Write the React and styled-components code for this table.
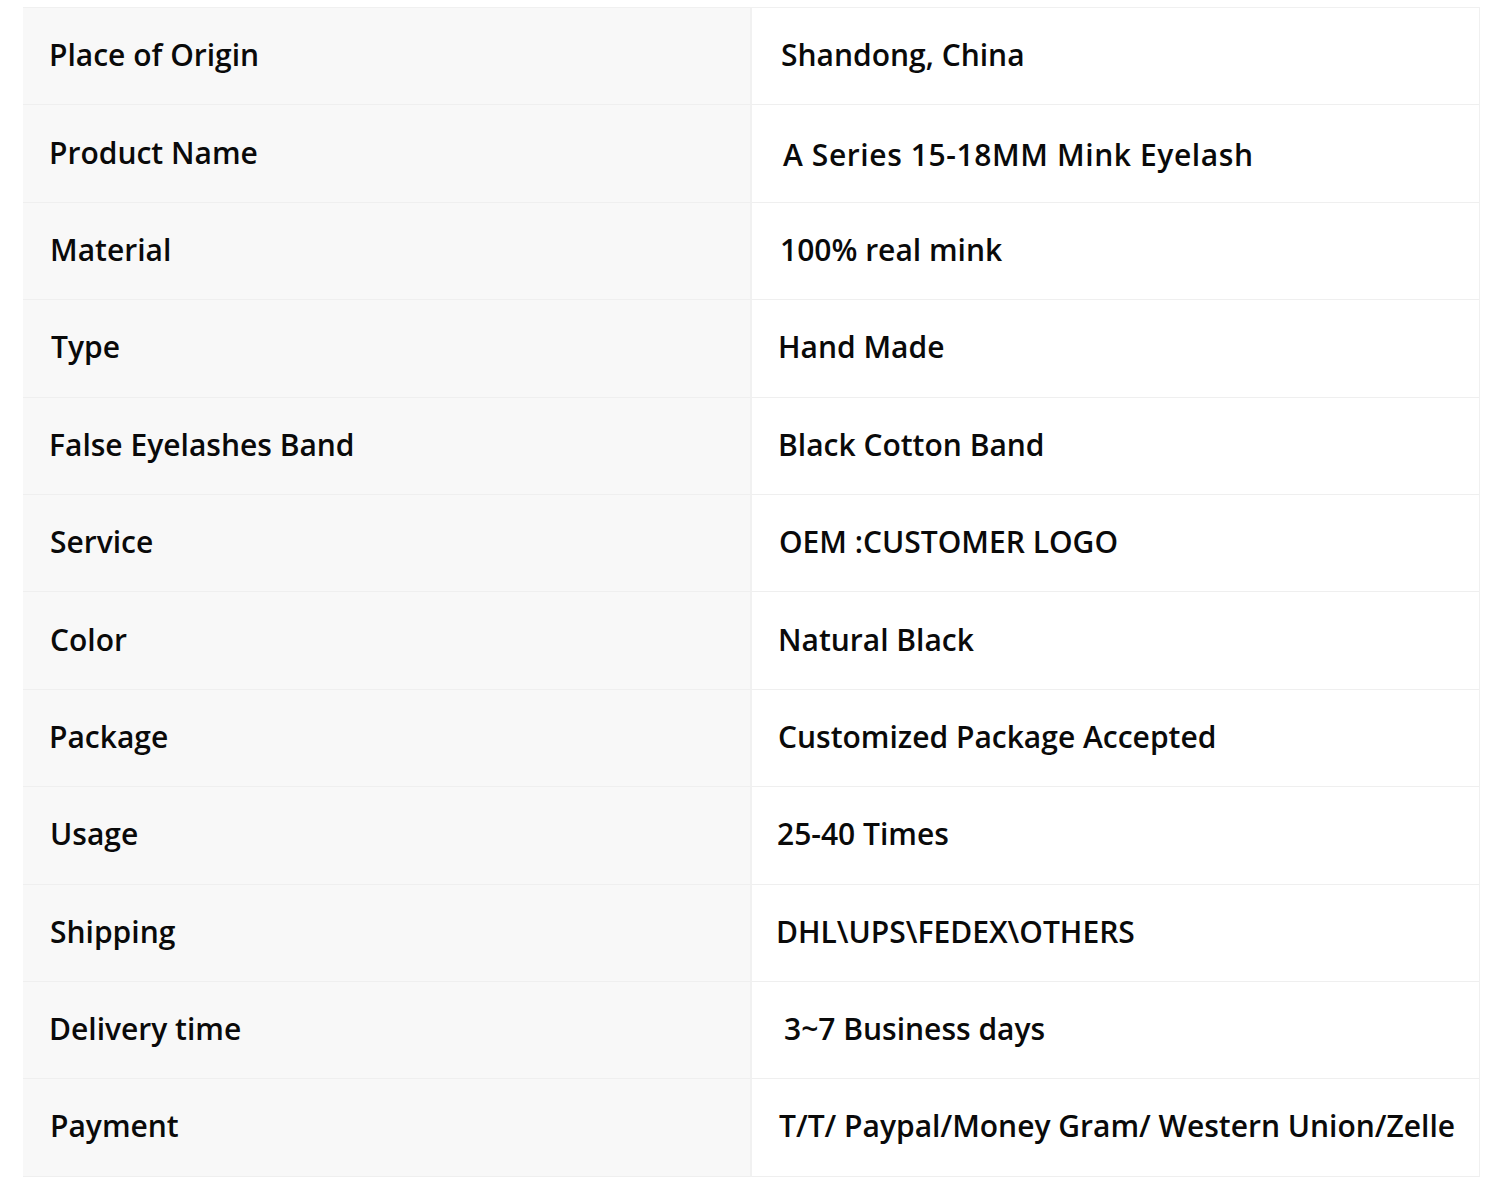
import React from 'react';
import styled, { createGlobalStyle } from 'styled-components';

const GlobalStyle = createGlobalStyle`
  body {
    margin: 0;
    background: #ffffff;
    font-family: "Open Sans", "Noto Sans", sans-serif;
  }
`;

const Page = styled.div`
  padding: 7px 20px 8px 23px;
`;

const Table = styled.div`
  display: grid;
  grid-template-columns: 729px 1fr;
  border-top: 1px solid #f0f0f0;
  border-right: 1px solid #f0f0f0;
`;

const Cell = styled.div`
  height: 97.4px;
  box-sizing: border-box;
  display: flex;
  align-items: center;
  padding-bottom: 3px;
  border-bottom: 1px solid #efefef;
  font-size: 30px;
  font-weight: 600;
  color: #0a0a0a;
  white-space: pre;
`;

const Label = styled(Cell)`
  background: #f8f8f8;
  padding-left: ${(p) => p.$x}px;
  border-right: 2px solid #f1f1f1;
`;

const Value = styled(Cell)`
  background: #ffffff;
  padding-left: ${(p) => p.$x}px;
  padding-top: ${(p) => p.$dy || 0}px;
  letter-spacing: ${(p) => p.$ls || 0}px;
`;

const rows = [
  { label: 'Place of Origin', value: 'Shandong, China', lx: 26, vx: 29 },
  { label: 'Product Name', value: 'A Series 15-18MM Mink Eyelash', lx: 26, vx: 31, ls: 0.6, dy: 5 },
  { label: 'Material', value: '100% real mink', lx: 27, vx: 28 },
  { label: 'Type', value: 'Hand Made', lx: 28, vx: 26 },
  { label: 'False Eyelashes Band', value: 'Black Cotton Band', lx: 26, vx: 26 },
  { label: 'Service', value: 'OEM :CUSTOMER LOGO', lx: 27, vx: 27 },
  { label: 'Color', value: 'Natural Black', lx: 27, vx: 26 },
  { label: 'Package', value: 'Customized Package Accepted', lx: 26, vx: 26 },
  { label: 'Usage', value: '25-40 Times', lx: 27, vx: 25 },
  { label: 'Shipping', value: 'DHL\\UPS\\FEDEX\\OTHERS', lx: 27, vx: 24 },
  { label: 'Delivery time', value: '3~7 Business days', lx: 26, vx: 32 },
  { label: 'Payment', value: 'T/T/ Paypal/Money Gram/ Western Union/Zelle', lx: 27, vx: 27 },
];

export default function App() {
  return (
    <Page>
      <GlobalStyle />
      <Table>
        {rows.map((r) => (
          <React.Fragment key={r.label}>
            <Label $x={r.lx}>{r.label}</Label>
            <Value $x={r.vx} $ls={r.ls} $dy={r.dy}>{r.value}</Value>
          </React.Fragment>
        ))}
      </Table>
    </Page>
  );
}
